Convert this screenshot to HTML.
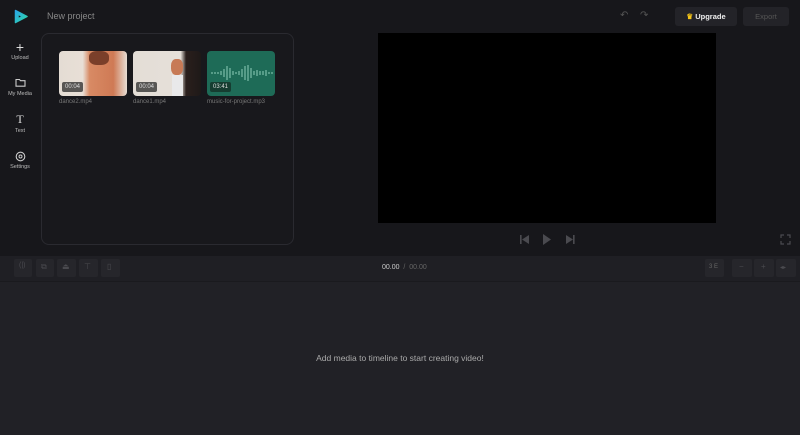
<!DOCTYPE html>
<html><head><meta charset="utf-8"><style>
*{box-sizing:border-box;margin:0;padding:0}
body{width:800px;height:435px;background:#17171b;font-family:"Liberation Sans",sans-serif;position:relative;overflow:hidden;color:#bbb}
.a{position:absolute}
.si{position:absolute;left:0;width:40px;text-align:center}
.thumb{position:absolute;top:51px;width:68px;height:45px;border-radius:4px;overflow:hidden}
.dur{position:absolute;left:3px;bottom:4px;background:rgba(40,40,40,.75);color:#ddd;font-size:6px;padding:2px 3px;border-radius:2px}
.lbl{position:absolute;top:99px;font-size:6px;color:#777}
.tb{position:absolute;top:259px;height:18px;background:#26262b;border-radius:2px}
</style></head><body>
<svg class="a" style="left:14px;top:9px" width="14" height="15" viewBox="0 0 14 15"><defs><linearGradient id="g" x1="0" y1="0" x2="1" y2="1"><stop offset="0" stop-color="#2aa6e8"/><stop offset="1" stop-color="#2fd6a3"/></linearGradient></defs><path d="M1.5 1.5 L13 7.5 L1.5 13.5 Z M4 5.2 L8.5 7.5 L4 9.8 Z" fill="url(#g)" fill-rule="evenodd" stroke="url(#g)" stroke-width="1.5" stroke-linejoin="round"/></svg>
<div class="a" style="left:47px;top:11px;font-size:9px;color:#888">New project</div>
<div class="a" style="left:620px;top:10px;font-size:10px;color:#555">↶</div>
<div class="a" style="left:640px;top:10px;font-size:10px;color:#555">↷</div>
<div class="a" style="left:675px;top:7px;width:62px;height:19px;background:#232328;border-radius:3px;color:#eee;font-size:7.5px;font-weight:bold;line-height:19px;text-align:center"><span style="color:#f5c518">♛</span> Upgrade</div>
<div class="a" style="left:743px;top:7px;width:46px;height:19px;background:#232328;border-radius:3px;color:#555;font-size:7.5px;line-height:19px;text-align:center">Export</div>
<div class="si" style="top:40px;font-size:14px;color:#ddd;line-height:14px">+</div>
<div class="si" style="top:55px;font-size:5.5px;color:#bbb">Upload</div>
<svg class="a" style="left:15px;top:78px" width="11" height="9"><path d="M1 1.5h3.5l1 1.2H10v5.5H1z" fill="none" stroke="#ccc" stroke-width="1.1"/></svg>
<div class="si" style="top:91px;font-size:5.5px;color:#bbb">My Media</div>
<div class="si" style="top:113px;font-size:12px;color:#ddd;font-family:'Liberation Serif',serif;line-height:12px">T</div>
<div class="si" style="top:128px;font-size:5.5px;color:#bbb">Text</div>
<svg class="a" style="left:15px;top:151px" width="11" height="11"><circle cx="5.5" cy="5.5" r="4.3" fill="none" stroke="#ccc" stroke-width="1.1"/><circle cx="5.5" cy="5.5" r="1.5" fill="none" stroke="#ccc"/></svg>
<div class="si" style="top:164px;font-size:5.5px;color:#bbb">Settings</div>
<div class="a" style="left:41px;top:33px;width:253px;height:212px;border:1px solid #2a2a30;border-radius:8px;background:#18181c"></div>
<div class="thumb" style="left:59px;background:linear-gradient(90deg,#e4dcd4 0%,#e8dfd6 35%,#d88a64 45%,#cf7a55 80%,#e6ddd4 100%)"><div class="a" style="left:30px;top:0;width:20px;height:14px;background:#7a3f2a;border-radius:40%"></div><div class="dur">00:04</div></div>
<div class="thumb" style="left:133px;background:linear-gradient(90deg,#e3ddd6 0%,#e6e0d9 70%,#2a1f1c 78%,#1e1918 100%)"><div class="a" style="left:38px;top:8px;width:12px;height:16px;background:#c77a56;border-radius:40%"></div><div class="a" style="left:39px;top:24px;width:11px;height:21px;background:#e9e9ea"></div><div class="dur">00:04</div></div>
<div class="thumb" style="left:207px;background:#1e6b57">
<svg class="a" style="left:0;top:12px" width="68" height="20"><g stroke="#8fcdb8" stroke-width="1"><path d="M2 10v0M5 9v2M8 9v2M11 9v2M14 8v4M17 6v8M20 3v14M23 5v10M26 8v4M29 9v2M32 8v4M35 6v8M38 3v14M41 2v16M44 5v10M47 8v4M50 7v6M53 8v4M56 8v4M59 7v6M62 9v2M65 9v2"/></g></svg>
<div class="dur" style="background:rgba(20,50,40,.8)">03:41</div></div>
<div class="lbl" style="left:59px">dance2.mp4</div>
<div class="lbl" style="left:133px">dance1.mp4</div>
<div class="lbl" style="left:207px">music-for-project.mp3</div>
<div class="a" style="left:378px;top:33px;width:338px;height:190px;background:#000"></div>
<svg class="a" style="left:519px;top:234px" width="60" height="11"><g fill="#4a4a4f"><rect x="1" y="1" width="1.6" height="9"/><path d="M10 1v9L3 5.5z"/><path d="M24 0v11l8-5.5z"/><path d="M47 1v9l7-4.5z"/><rect x="54" y="1" width="1.6" height="9"/></g></svg>
<svg class="a" style="left:780px;top:234px" width="11" height="11"><path d="M1 4V1h3M7 1h3v3M10 7v3H7M4 10H1V7" fill="none" stroke="#4a4a4f" stroke-width="1.2"/></svg>
<div class="a" style="left:0;top:256px;width:800px;height:25px;background:#1f1f24"></div>
<div class="tb" style="left:14px;width:18px"></div>
<div class="tb" style="left:36px;width:18px"></div>
<div class="tb" style="left:57px;width:19px"></div>
<div class="tb" style="left:79px;width:19px"></div>
<div class="tb" style="left:101px;width:19px"></div>
<div class="a" style="left:19px;top:262px;font-size:7px;color:#4a4a4f">(|)</div>
<div class="a" style="left:41px;top:262px;font-size:8px;color:#4a4a4f">⧉</div>
<div class="a" style="left:62px;top:262px;font-size:8px;color:#4a4a4f">⏏</div>
<div class="a" style="left:84px;top:262px;font-size:8px;color:#4a4a4f">⊤</div>
<div class="a" style="left:107px;top:262px;font-size:8px;color:#4a4a4f">▯</div>
<div class="a" style="left:382px;top:264px;font-size:7px;color:#ccc">00.00 <span style="color:#666">&nbsp;/&nbsp; 00.00</span></div>
<div class="tb" style="left:705px;width:19px"></div>
<div class="tb" style="left:732px;width:20px"></div>
<div class="tb" style="left:754px;width:20px"></div>
<div class="tb" style="left:776px;width:20px"></div>
<div class="a" style="left:709px;top:264px;font-size:6px;color:#666">3 E</div>
<div class="a" style="left:739px;top:262px;font-size:8px;color:#4a4a4f">−</div>
<div class="a" style="left:761px;top:262px;font-size:8px;color:#4a4a4f">+</div>
<div class="a" style="left:780px;top:264px;font-size:6px;color:#4a4a4f">◂▸</div>
<div class="a" style="left:0;top:281px;width:800px;height:154px;background:#212126;border-top:1px solid #1a1a1e"></div>
<div class="a" style="left:0;top:353px;width:800px;text-align:center;font-size:8.5px;color:#aaa">Add media to timeline to start creating video!</div>
</body></html>
